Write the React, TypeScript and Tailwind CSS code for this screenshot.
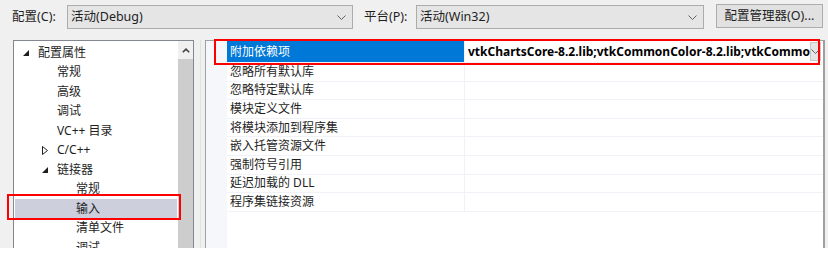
import React from 'react';

const font = "font-['Noto_Sans','Noto_Sans_CJK_SC',sans-serif]";

function Chevron({ className = '' }: { className?: string }) {
    return (
        <svg width="9" height="5" viewBox="0 0 9 5" className={className}>
            <path d="M0.5 0.5 L4.5 4.5 L8.5 0.5" fill="none" stroke="#606060" strokeWidth="1" />
        </svg>
    );
}

function Combo({ text, width }: { text: string; width: string }) {
    return (
        <div className={`${width} h-[24px] bg-[#e5e5e5] border border-[#acacac] flex items-center pl-[3px] pr-[6px]`}>
            <span className="flex-1 text-[12.5px] text-[#1e1e1e]">{text}</span>
            <Chevron />
        </div>
    );
}

type TreeItem = { label: string; level: number; arrow?: 'open' | 'closed'; selected?: boolean };

const tree: TreeItem[] = [
    { label: '配置属性', level: 0, arrow: 'open' },
    { label: '常规', level: 1 },
    { label: '高级', level: 1 },
    { label: '调试', level: 1 },
    { label: 'VC++ 目录', level: 1 },
    { label: 'C/C++', level: 1, arrow: 'closed' },
    { label: '链接器', level: 1, arrow: 'open' },
    { label: '常规', level: 2 },
    { label: '输入', level: 2, selected: true },
    { label: '清单文件', level: 2 },
    { label: '调试', level: 2 },
];

function Arrow({ kind }: { kind: 'open' | 'closed' }) {
    if (kind === 'open') {
        return (
            <svg width="6" height="6" viewBox="0 0 6 6" className="mr-[9px]">
                <path d="M6 0 L6 6 L0 6 Z" fill="#1e1e1e" />
            </svg>
        );
    }
    return (
        <svg width="6" height="9" viewBox="0 0 6 9" className="mr-[9px]">
            <path d="M0.5 0.5 L5.5 4.5 L0.5 8.5 Z" fill="none" stroke="#1e1e1e" strokeWidth="1" />
        </svg>
    );
}

const props = [
    '忽略所有默认库',
    '忽略特定默认库',
    '模块定义文件',
    '将模块添加到程序集',
    '嵌入托管资源文件',
    '强制符号引用',
    '延迟加载的 DLL',
    '程序集链接资源',
];

export default function App() {
    return (
        <div className={`w-[828px] h-[257px] bg-white relative overflow-hidden ${font}`}>
            <div className="h-[248px] bg-[#f0f0f0] flex flex-col overflow-hidden">
                {/* top toolbar */}
                <div className="h-[40px] shrink-0 flex items-start pt-[5px] text-[12.5px] text-[#1e1e1e]">
                    <div className="w-[67px] pl-[12px] h-[24px] flex items-center">配置(C):</div>
                    <Combo text="活动(Debug)" width="w-[286px]" />
                    <div className="w-[63px] pl-[11px] h-[24px] flex items-center">平台(P):</div>
                    <Combo text="活动(Win32)" width="w-[288px]" />
                    <div className="ml-[12px] -mt-[1px] w-[107px] h-[24px] bg-[#e1e1e1] border border-[#adadad] flex items-center justify-center">
                        配置管理器(O)...
                    </div>
                </div>

                {/* body */}
                <div className="flex flex-1 min-h-0">
                    {/* tree */}
                    <div className="ml-[13px] w-[181px] shrink-0 bg-white border border-[#828790] border-b-0 flex">
                        <div className="flex-1 pt-[2px] px-[1px]">
                            {tree.map((t, i) => (
                                <div
                                    key={i}
                                    className={`h-[19.5px] flex items-center text-[12px] text-[#1e1e1e] ${t.selected ? 'bg-[#cdd0dc]' : ''}`}
                                >
                                    {t.arrow ? (
                                        <div className={`flex items-center ${t.level === 0 ? 'pl-[8px]' : 'pl-[27px]'}`}>
                                            <Arrow kind={t.arrow} />
                                            <span>{t.label}</span>
                                        </div>
                                    ) : (
                                        <span className={t.level === 1 ? 'pl-[42px]' : 'pl-[61px]'}>{t.label}</span>
                                    )}
                                </div>
                            ))}
                        </div>
                        {/* scrollbar */}
                        <div className="w-[15px] bg-[#f0f0f0] flex flex-col">
                            <div className="h-[18px] flex items-center justify-center">
                                <svg width="8" height="5" viewBox="0 0 8 5">
                                    <path d="M0.8 4.3 L4 1.2 L7.2 4.3" fill="none" stroke="#404040" strokeWidth="1.6" />
                                </svg>
                            </div>
                            <div className="flex-1 bg-[#cdcdcd]" />
                        </div>
                    </div>

                    {/* splitter */}
                    <div className="w-[11px] shrink-0 flex justify-center pl-[2px]">
                        <div className="w-[1px] h-full bg-[#e2e2e2]" />
                    </div>

                    {/* property grid */}
                    <div className="w-[620px] shrink-0 bg-white border border-[#a0a0a0] border-r-2 border-b-0 flex">
                        <div className="w-[21px] shrink-0 bg-[#f5f7fb]" />
                        <div className="flex-1 min-w-0 flex flex-col">
                            <div className="h-[22px] flex border-b border-[#f0f2f7]">
                                <div className="w-[237px] shrink-0 bg-[#0078d7] text-white text-[12px] flex items-center pl-[3px]">附加依赖项</div>
                                <div className="w-[1px] shrink-0 bg-[#f0f2f7]" />
                                <div className="flex-1 min-w-0 flex items-center pl-[3px] pr-[2px]">
                                    <span className="flex-1 min-w-0 overflow-hidden whitespace-nowrap text-[12px] font-bold text-black">
                                        vtkChartsCore-8.2.lib;vtkCommonColor-8.2.lib;vtkCommonComputationalGeometry-8.2.lib
                                    </span>
                                    <div className="w-[11px] h-[19px] shrink-0 bg-[#e5e5e5] border border-[#c8c8c8] flex items-center justify-center">
                                        <Chevron />
                                    </div>
                                </div>
                            </div>
                            {props.map((p) => (
                                <div key={p} className="h-[18.6px] flex border-b border-[#f0f2f7]">
                                    <div className="w-[237px] shrink-0 text-[12px] text-[#1e1e1e] flex items-center pl-[3px]">{p}</div>
                                    <div className="w-[1px] shrink-0 bg-[#f0f2f7]" />
                                    <div className="flex-1" />
                                </div>
                            ))}
                        </div>
                    </div>
                </div>
            </div>

            {/* red annotation boxes */}
            <div className="absolute left-[214px] top-[39px] w-[606px] h-[26px] border-2 border-[#ff0000]" />
            <div className="absolute left-[7px] top-[194px] w-[174px] h-[26px] border-2 border-[#ff0000]" />
        </div>
    );
}
